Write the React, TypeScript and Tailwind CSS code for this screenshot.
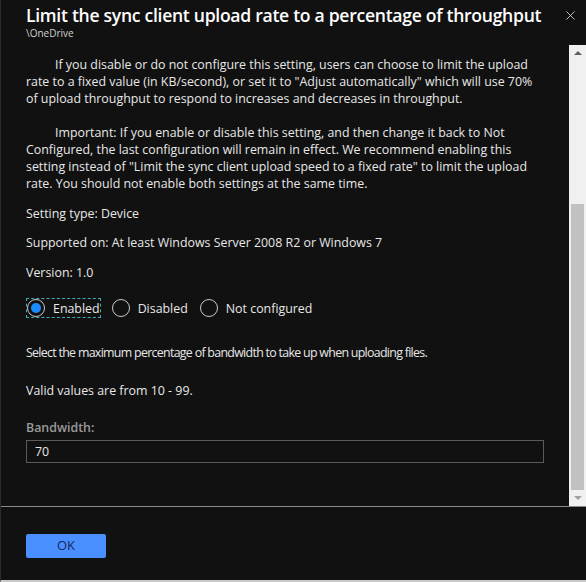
import { X } from 'lucide-react'

const font = { fontFamily: '"Open Sans", "Noto Sans", sans-serif' }

function Radio({ label, checked, focused }: { label: string; checked?: boolean; focused?: boolean }) {
  return (
    <div
      className={
        'flex items-center gap-[8px] h-[20px] pl-[1px] pr-[1px] ' +
        (focused ? 'outline outline-1 outline-dashed outline-[#3fa9b5] -outline-offset-1' : '')
      }
    >
      <span className="w-[18px] h-[18px] rounded-full border border-[#c8c8c8] flex items-center justify-center">
        {checked && <span className="w-[10px] h-[10px] rounded-full bg-[#1a8cff]" />}
      </span>
      <span className="text-[12.4px] text-[#e8e8e8]">{label}</span>
    </div>
  )
}

function Scrollbar() {
  return (
    <div className="w-[17px] shrink-0 bg-[#f0f0f0] flex flex-col">
      <div className="h-[17px] flex items-center justify-center">
        <span className="w-0 h-0 border-l-[4px] border-r-[4px] border-b-[4px] border-l-transparent border-r-transparent border-b-[#606060]" />
      </div>
      <div className="flex-1 flex flex-col px-[2px]">
        <div className="h-[142px]" />
        <div className="h-[286px] bg-[#c1c1c1]" />
      </div>
      <div className="h-[17px] flex items-center justify-center">
        <span className="w-0 h-0 border-l-[4px] border-r-[4px] border-t-[4px] border-l-transparent border-r-transparent border-t-[#a0a0a0]" />
      </div>
    </div>
  )
}

export default function App() {
  return (
    <div
      className="w-[586px] h-[582px] bg-[#111111] border-l border-[#2c2c2c] border-b-2 border-b-[#c9c9c9] flex flex-col overflow-hidden"
      style={font}
    >
      <div className="h-[45px] shrink-0 flex justify-between pl-[25px] pr-[8px] pt-[3px]">
        <div>
          <div className="text-[17.6px] leading-[24px] font-semibold text-white whitespace-nowrap tracking-[-0.3px]">
            Limit the sync client upload rate to a percentage of throughput
          </div>
          <div className="text-[10px] leading-[12px] text-[#d0d0d0]">\OneDrive</div>
        </div>
        <X className="w-[15px] h-[15px] text-[#e0e0e0] mt-[5px]" strokeWidth={1.3} />
      </div>

      <div className="flex-1 flex min-h-0">
        <div className="flex-1 min-w-0 overflow-hidden pl-[25px] pr-[25px] pt-[11px] text-[12.4px] leading-[17px] text-[#e8e8e8] whitespace-nowrap">
          <p className="indent-[29px]">
            If you disable or do not configure this setting, users can choose to limit the upload
            <br />
            rate to a fixed value (in KB/second), or set it to "Adjust automatically" which will use 70%
            <br />
            of upload throughput to respond to increases and decreases in throughput.
          </p>
          <p className="indent-[29px] mt-[17px]">
            Important: If you enable or disable this setting, and then change it back to Not
            <br />
            Configured, the last configuration will remain in effect. We recommend enabling this
            <br />
            setting instead of "Limit the sync client upload speed to a fixed rate" to limit the upload
            <br />
            rate. You should not enable both settings at the same time.
          </p>
          <p className="mt-[13px]">Setting type: Device</p>
          <p className="mt-[12px]">Supported on: At least Windows Server 2008 R2 or Windows 7</p>
          <p className="mt-[13px]">Version: 1.0</p>
          <div className="flex items-center gap-[10px] mt-[17px]">
            <Radio label="Enabled" checked focused />
            <Radio label="Disabled" />
            <Radio label="Not configured" />
          </div>
          <p className="mt-[26px] tracking-[-0.7px]">
            Select the maximum percentage of bandwidth to take up when uploading files.
          </p>
          <p className="mt-[21px]">Valid values are from 10 - 99.</p>
          <p className="mt-[20px] text-[#9a9a9a] font-semibold">Bandwidth:</p>
          <div className="mt-[4px] h-[23px] w-[518px] border border-[#5a5a5a] flex items-center pl-[8px] text-[#e8e8e8]">
            70
          </div>
        </div>
        <Scrollbar />
      </div>

      <div className="h-[74px] shrink-0 border-t border-[#8a8a8a] pl-[25px] pt-[25px]">
        <button className="w-[80px] h-[24px] rounded-[2px] bg-[#4a8fff] text-[13px] text-[#15275c]">OK</button>
      </div>
    </div>
  )
}
